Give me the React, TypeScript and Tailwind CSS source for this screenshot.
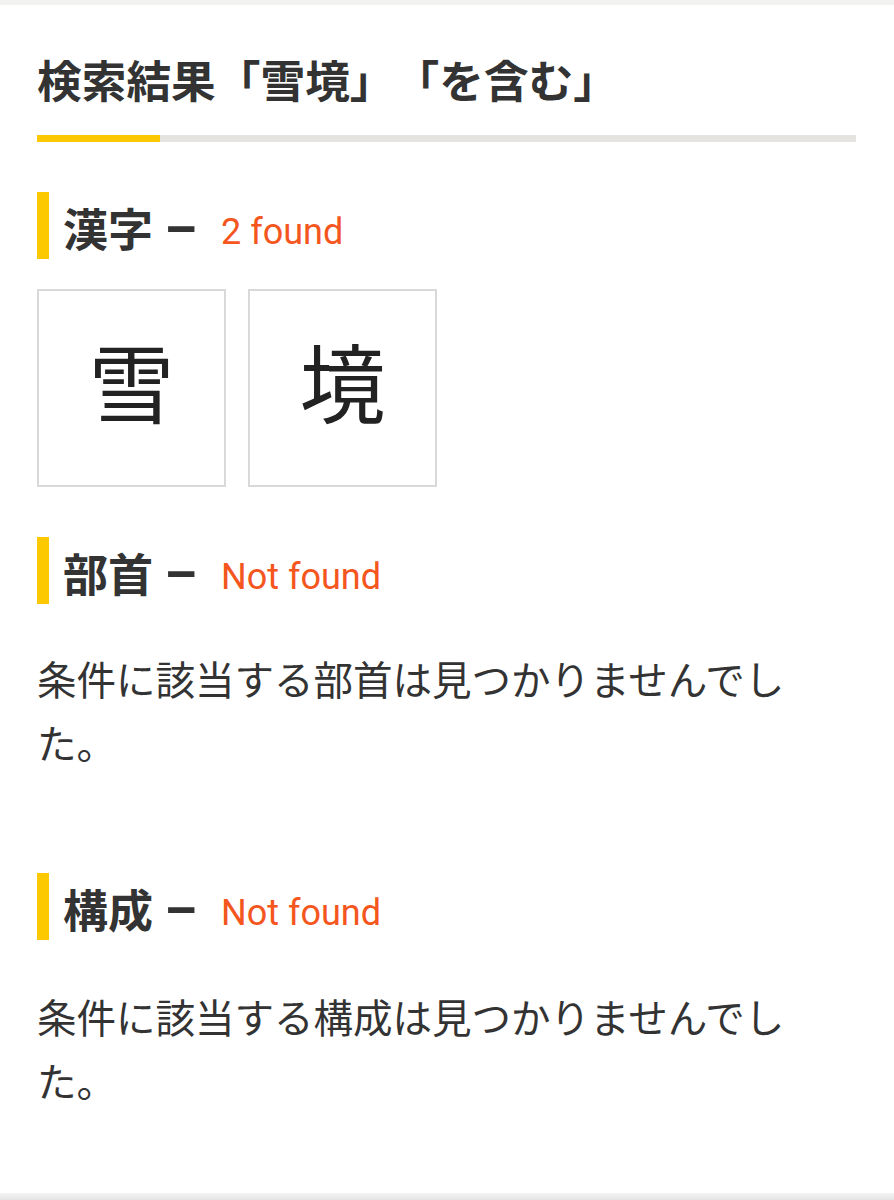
import React from "react";

const CJK = "font-['Roboto','Noto_Sans_CJK_JP',sans-serif]";

function SectionHeader({ title, status }: { title: string; status: string }) {
  return (
    <div className="flex h-[67px] items-start border-l-[12px] border-[#fcc800] pl-[14px] pt-[12px]">
      <div className="whitespace-nowrap leading-[50px]">
        <span className="text-[45px] font-bold text-[#333333]">{title} </span>
        <span className="text-[52px] leading-none font-bold text-[#333333]">–</span>
        <span className="ml-[24px] align-[3px] text-[36px] font-normal text-[#f4561e]">{status}</span>
      </div>
    </div>
  );
}

function KanjiBox({ ch }: { ch: string }) {
  return (
    <div className="flex h-[198px] w-[189px] items-center justify-center border-2 border-[#d9d9d9] bg-white">
      <span className="text-[86px] leading-none font-normal text-[#222222]">{ch}</span>
    </div>
  );
}

export default function App() {
  return (
    <div className={`flex h-[1200px] flex-col bg-white ${CJK}`}>
      <div className="h-[5px] bg-[#f2f2f0]" />
      <main className="flex-1 pl-[37px] pr-[38px]">
        <h1 className="mt-[51px] whitespace-nowrap text-[44.7px] leading-[45px] font-bold text-[#333333] font-['Noto_Sans_CJK_JP',sans-serif] [text-spacing-trim:space-all]">
          検索結果「雪境」「を含む」
        </h1>
        <div className="mt-[34px] flex h-[7px] bg-[#e6e4e0]">
          <div className="w-[123px] bg-[#fcc800]" />
        </div>

        <section className="mt-[50px]">
          <SectionHeader title="漢字" status="2 found" />
          <div className="mt-[30px] flex gap-[22px]">
            <KanjiBox ch="雪" />
            <KanjiBox ch="境" />
          </div>
        </section>

        <section className="mt-[50px]">
          <SectionHeader title="部首" status="Not found" />
          <p className="mt-[42px] text-[39.5px] leading-[64px] text-[#333333] font-['Noto_Sans_CJK_JP',sans-serif]">
            条件に該当する部首は見つかりませんでした。
          </p>
        </section>

        <section className="mt-[99px]">
          <SectionHeader title="構成" status="Not found" />
          <p className="mt-[44px] text-[39.5px] leading-[64px] text-[#333333] font-['Noto_Sans_CJK_JP',sans-serif]">
            条件に該当する構成は見つかりませんでした。
          </p>
        </section>
      </main>
      <div className="h-[7px] bg-gradient-to-b from-[#f4f4f4] to-[#e4e4e4]" />
    </div>
  );
}
